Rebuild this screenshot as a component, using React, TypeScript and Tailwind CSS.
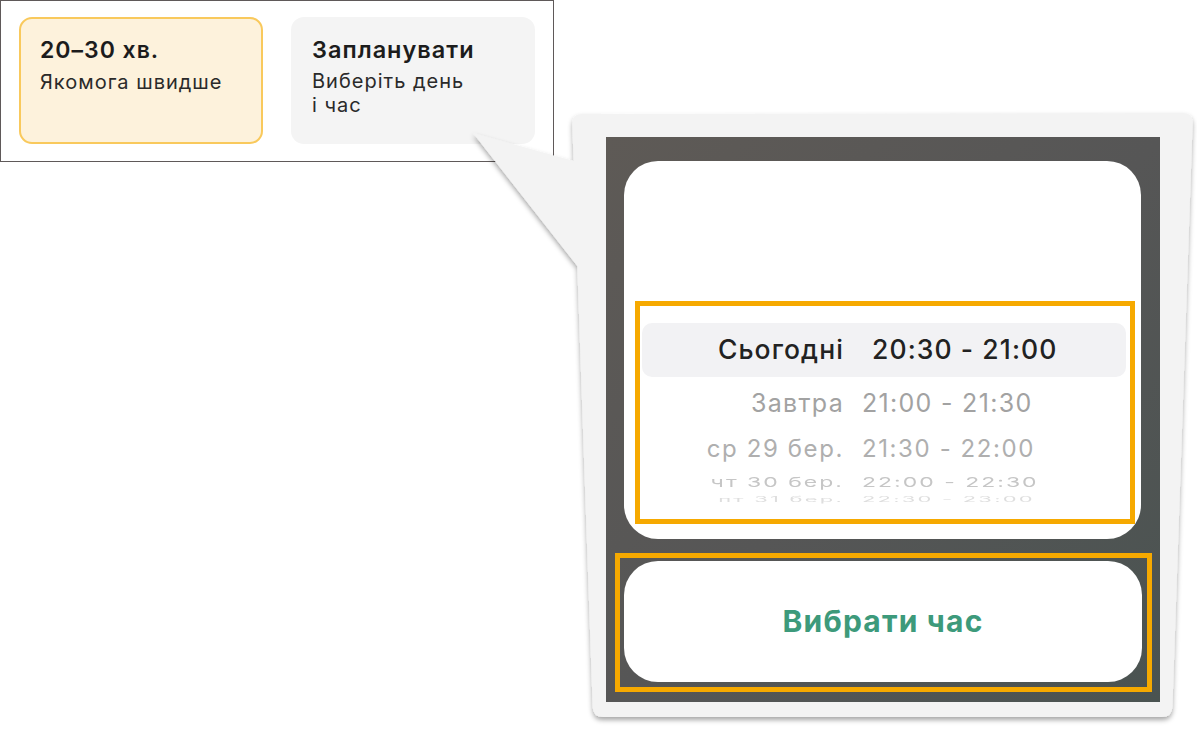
const slots = [
  { day: "Завтра", time: "21:00 - 21:30", row: "h-[54px]", text: "text-[25px] text-[#a2a2a2] tracking-[1.3px]", squash: "" },
  { day: "ср 29 бер.", time: "21:30 - 22:00", row: "h-[35px]", text: "text-[24px] text-[#afafaf] tracking-[1.6px]", squash: "" },
  { day: "чт 30 бер.", time: "22:00 - 22:30", row: "h-[22px] mt-[5px]", text: "text-[23px] text-[#c6c6c6] tracking-[2px]", squash: "scale-y-[0.6]" },
  { day: "пт 31 бер.", time: "22:30 - 23:00", row: "h-[13px]", text: "text-[22px] text-[#dedede] tracking-[2.2px]", squash: "scale-y-[0.33]" },
];

function Callout() {
  // speech bubble: slightly skewed sheet with a tail pointing at the "Запланувати" card
  return (
    <svg className="absolute inset-0 pointer-events-none" width="1197" height="736" viewBox="0 0 1197 736">
      <defs>
        <filter id="drop" x="-10%" y="-10%" width="120%" height="120%">
          <feDropShadow dx="0" dy="3" stdDeviation="2.5" floodColor="#000" floodOpacity="0.35" />
        </filter>
      </defs>
      <path
        d="M582 114 L1183 113 Q1193 113 1192.6 123 L1172.4 707 Q1172 717 1162 717 L603 717 Q593 717 592.7 707 L577.3 266 L473 133 L573.6 161 L572.3 124 Q572 114 582 114 Z"
        fill="#f3f3f3"
        filter="url(#drop)"
      />
    </svg>
  );
}

export default function App() {
  return (
    <div className="relative w-[1197px] h-[736px] overflow-hidden bg-white flex items-start font-['Inter','Noto_Sans',sans-serif]">
      {/* delivery options */}
      <div className="w-[554px] h-[162px] border border-[#5f5959] flex gap-[28px] pl-[18px] pt-[16px] shrink-0">
        <div className="w-[244px] h-[127px] rounded-[13px] bg-[#fdf2dc] border-2 border-[#f9c95c] pl-[19px] pt-[17px]">
          <p className="text-[23px] leading-[28px] font-semibold tracking-[1px] text-[#1c1c1c]">20–30 хв.</p>
          <p className="text-[20px] leading-[24px] mt-[6px] tracking-[1px] text-[#2a2a2a]">Якомога швидше</p>
        </div>
        <div className="w-[244px] h-[127px] rounded-[13px] bg-[#f4f4f4] pl-[21px] pt-[19px]">
          <p className="text-[23.5px] leading-[28px] font-semibold tracking-[1px] text-[#1c1c1c]">Запланувати</p>
          <p className="text-[20px] leading-[24px] mt-[5px] tracking-[1px] text-[#2a2a2a]">
            Виберіть день
            <br />і час
          </p>
        </div>
      </div>

      <Callout />

      {/* phone screenshot inside bubble */}
      <div className="relative ml-[17px] mt-[113px] w-[621px] h-[604px] pl-[35px] pt-[24px]">
        <div className="w-[554px] h-[565px] bg-linear-to-br from-[#5e5a56] via-[#565656] to-[#4a5351] flex flex-col">
          <div className="ml-[18px] mt-[24px] w-[517px] h-[378px] rounded-[34px] bg-white pl-[11px] pt-[140px]">
            <div className="w-[500px] h-[223px] border-[5px] border-[#f6a900] pt-[17px]">
              <div className="ml-[2px] w-[484px] h-[54px] rounded-[10px] bg-[#f2f2f4] flex items-center text-[26.5px] font-medium tracking-[1.1px] text-[#222]">
                <span className="w-[202px] text-right">Сьогодні</span>
                <span className="ml-[28px]">20:30 - 21:00</span>
              </div>
              {slots.map((s) => (
                <div key={s.day} className={`flex items-center ${s.row}`}>
                  <div className={`flex items-center ${s.squash} ${s.text}`}>
                    <span className="w-[204px] text-right">{s.day}</span>
                    <span className="ml-[18px]">{s.time}</span>
                  </div>
                </div>
              ))}
            </div>
          </div>

          <div className="ml-[9px] mt-[14px] w-[537px] h-[139px] border-[5px] border-[#f6a900] pl-[4px] pt-[3px]">
            <button className="w-[518px] h-[121px] rounded-[34px] bg-white flex items-center justify-center text-[30px] font-bold tracking-[1.2px] text-[#3d9a7b]">
              Вибрати час
            </button>
          </div>
        </div>
      </div>
    </div>
  );
}
